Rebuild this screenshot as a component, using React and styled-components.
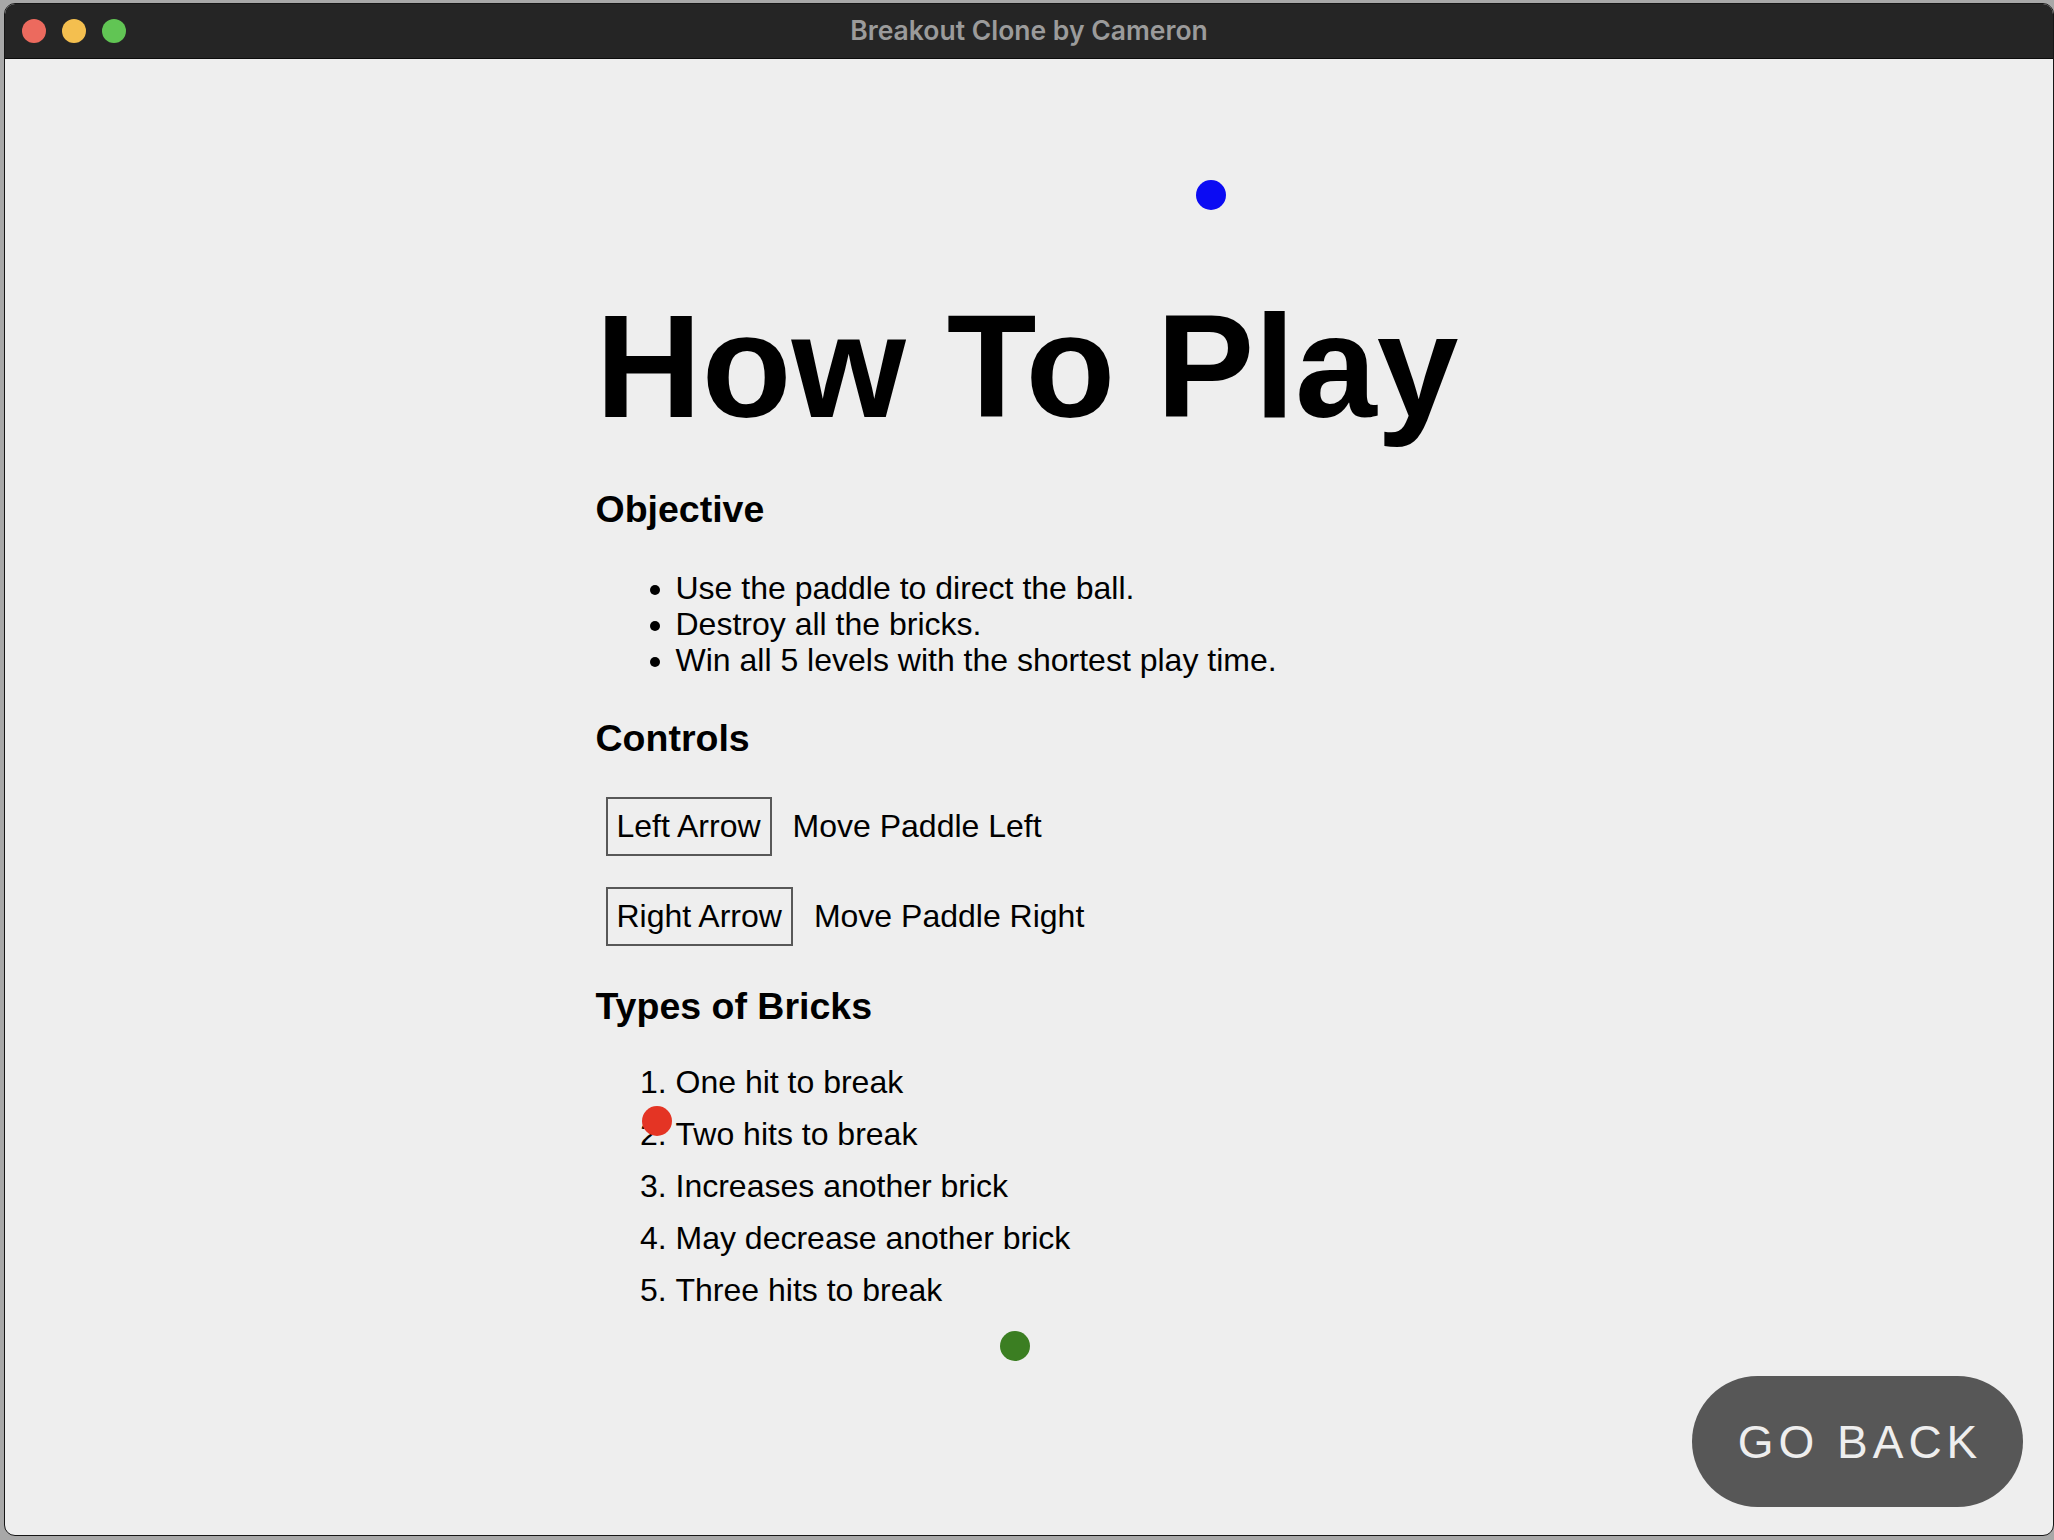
import React from 'react'
import styled, { createGlobalStyle } from 'styled-components'

const GlobalStyle = createGlobalStyle`
  html, body {
    margin: 0;
    padding: 0;
    background: #a8a8a8;
    overflow: hidden;
  }
  * {
    box-sizing: border-box;
  }
`

const objectives = [
  'Use the paddle to direct the ball.',
  'Destroy all the bricks.',
  'Win all 5 levels with the shortest play time.',
]

const controls = [
  { key: 'Left Arrow', action: 'Move Paddle Left' },
  { key: 'Right Arrow', action: 'Move Paddle Right' },
]

const bricks = [
  'One hit to break',
  'Two hits to break',
  'Increases another brick',
  'May decrease another brick',
  'Three hits to break',
]

const balls = [
  { color: '#0b0bf3', x: 1191, y: 121 },
  { color: '#e43424', x: 637, y: 1047 },
  { color: '#3b7e22', x: 995, y: 1272 },
]

const App = () => {
  return (
    <>
      <GlobalStyle />
      <Window>
        <TitleBar>
          <Lights>
            <Light color="#ec6a5e" />
            <Light color="#f4bf4f" />
            <Light color="#61c554" />
          </Lights>
          <WindowTitle>Breakout Clone by Cameron</WindowTitle>
        </TitleBar>
        <Content>
          <Main>
            <Title>How To Play</Title>

            <Heading>Objective</Heading>
            <BulletList>
              {objectives.map(o => (
                <li key={o}>{o}</li>
              ))}
            </BulletList>

            <Heading>Controls</Heading>
            {controls.map((c, i) => (
              <ControlRow key={c.key} first={i === 0}>
                <KeyBox>{c.key}</KeyBox>
                <KeyAction>{c.action}</KeyAction>
              </ControlRow>
            ))}

            <Heading>Types of Bricks</Heading>
            <NumberList>
              {bricks.map(b => (
                <li key={b}>{b}</li>
              ))}
            </NumberList>
          </Main>

          <Footer>
            <BackButton>Go Back</BackButton>
          </Footer>

          {balls.map(b => (
            <Ball key={b.color} color={b.color} style={{ left: b.x, top: b.y }} />
          ))}
        </Content>
      </Window>
    </>
  )
}

export default App

const Window = styled.div`
  margin: 3px 0 0 4px;
  width: 2050px;
  height: 1533px;
  border: 1px solid #161616;
  border-radius: 11px;
  overflow: hidden;
  display: flex;
  flex-direction: column;
  background: #eeeeee;
`

const TitleBar = styled.div`
  height: 55px;
  flex-shrink: 0;
  background: #252525;
  border-bottom: 1px solid #0c0c0c;
  display: grid;
  grid-template-columns: 1fr auto 1fr;
  align-items: center;
  padding: 0 17px;
`

const Lights = styled.div`
  display: flex;
  gap: 16px;
`

const Light = styled.span`
  width: 24px;
  height: 24px;
  border-radius: 50%;
  background: ${p => p.color};
`

const WindowTitle = styled.div`
  font-family: Inter, 'Noto Sans', sans-serif;
  font-weight: 600;
  font-size: 26.5px;
  color: #9b9b9b;
  margin-top: -2px;
`

const Content = styled.div`
  position: relative;
  flex: 1;
  display: flex;
  flex-direction: column;
  padding-top: 224px;
  font-family: 'Liberation Sans', Arial, sans-serif;
  color: #000;
`

const Main = styled.div`
  width: 867px;
  align-self: center;
`

const Title = styled.h1`
  margin: 0;
  font-size: 147px;
  line-height: 166px;
  font-weight: 700;
  white-space: nowrap;
`

const Heading = styled.h3`
  margin: 39px 0 0;
  font-size: 37.5px;
  line-height: 42px;
  font-weight: 700;
`

const BulletList = styled.ul`
  margin: 40px 0 0;
  padding-left: 80px;
  font-size: 32px;
  line-height: 36px;
`

const ControlRow = styled.div`
  display: flex;
  align-items: center;
  gap: 21px;
  margin: ${p => (p.first ? '38px' : '31px')} 0 0 10px;
`

const KeyBox = styled.span`
  border: 2px solid #585858;
  padding: 9px;
  font-size: 32px;
  line-height: 37px;
`

const KeyAction = styled.span`
  font-size: 32px;
  line-height: 37px;
`

const NumberList = styled.ol`
  margin: 29px 0 0;
  padding-left: 80px;
  font-size: 32px;
  line-height: 52px;
`

const Footer = styled.div`
  margin-top: auto;
  display: flex;
  justify-content: flex-end;
  padding: 0 30px 28px 0;
`

const BackButton = styled.button`
  width: 331px;
  height: 131px;
  border: none;
  border-radius: 66px;
  background: #575757;
  color: #eeeeee;
  font-family: 'Liberation Sans', Arial, sans-serif;
  font-size: 46px;
  letter-spacing: 5px;
  text-transform: uppercase;
  padding: 0 0 0 5px;
  display: flex;
  align-items: center;
  justify-content: center;
  cursor: pointer;
`

const Ball = styled.span`
  position: absolute;
  width: 30px;
  height: 30px;
  border-radius: 50%;
  background: ${p => p.color};
`
